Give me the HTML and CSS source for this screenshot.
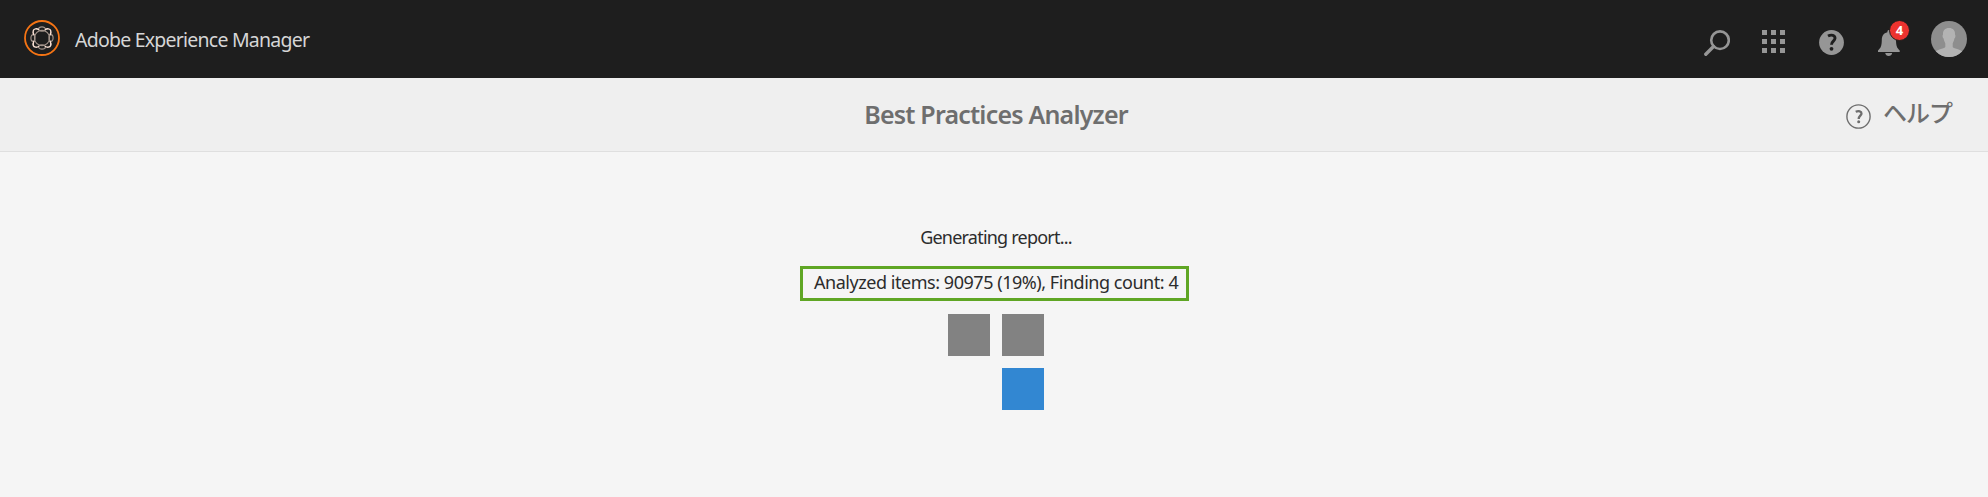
FILE: index.html
```html
<!DOCTYPE html>
<html lang="ja">
<head>
<meta charset="utf-8">
<title>Best Practices Analyzer</title>
<link rel="stylesheet" href="styles.css">
</head>
<body>
<header class="shell">
  <div class="brand">
    <svg class="logo" width="36" height="36" viewBox="-18 -18 36 36" fill="none">
      <circle r="17" stroke="#f57414" stroke-width="1.8"/>
      <g stroke="#a3948b" stroke-width="1.1">
        <ellipse cy="-9" rx="3.4" ry="2.1"/><ellipse cy="9" rx="3.4" ry="2.1"/>
        <ellipse cx="-9" rx="2.1" ry="3.4"/><ellipse cx="9" rx="2.1" ry="3.4"/>
        <circle r="7.6"/>
      </g>
      <path stroke="#ffe5d8" stroke-width="1.4" d="M-3-8.2C-5-9.6-8-9.6-8.7-7.5C-9.3-6-8.8-4.5-8-3M3-8.2C5-9.6 8-9.6 8.7-7.5C9.3-6 8.8-4.5 8-3M-3 8.2C-5 9.6-8 9.6-8.7 7.5C-9.3 6-8.8 4.5-8 3M3 8.2C5 9.6 8 9.6 8.7 7.5C9.3 6 8.8 4.5 8 3"/>
    </svg>
    <span class="product">Adobe Experience Manager</span>
  </div>
  <nav class="actions">
    <svg class="icon" width="26" height="26" viewBox="0 0 26 26" fill="none" stroke="#969696">
      <circle cx="16" cy="10.2" r="8.8" stroke-width="2.6"/>
      <path d="M9.5 16.5L1.8 24.2" stroke-width="3.4" stroke-linecap="round"/>
    </svg>
    <svg class="icon" width="24" height="24" viewBox="0 0 24 24" fill="#969696">
      <path d="M0 0h5v5H0zM9 0h5v5H9zM18 0h5v5h-5zM0 9h5v5H0zM9 9h5v5H9zM18 9h5v5h-5zM0 18h5v5H0zM9 18h5v5H9zM18 18h5v5h-5z"/>
    </svg>
    <svg class="icon" width="25" height="25" viewBox="0 0 25 25">
      <circle cx="12.5" cy="12.5" r="12.4" fill="#969696"/>
      <path d="M9 6.1C12.5 4.2 16.2 5.3 16 8.4C15.8 11 12.4 11.5 12.5 14.7" fill="none" stroke="#1e1e1e" stroke-width="2.9"/>
      <circle cx="12.5" cy="18.8" r="1.9" fill="#1e1e1e"/>
    </svg>
    <div class="alerts">
      <svg class="icon" width="22" height="26" viewBox="0 0 22 26" fill="#969696">
        <path d="M10.9 0C12 0 12.4.8 12.4 2.2C16.5 3 17.9 6 18 10C18.1 16 19 18 21.7 20.4V22H0V20.4C2.8 18 3.7 16 3.8 10C3.9 6 5.4 3 9.4 2.2C9.4.8 9.8 0 10.9 0ZM7.2 23H14.2C13.8 24.8 12.6 26 10.7 26C8.8 26 7.6 24.8 7.2 23Z"/>
      </svg>
      <span class="badge">4</span>
    </div>
    <svg class="avatar" width="36" height="36" viewBox="0 0 36 36">
      <defs><clipPath id="face"><circle cx="18" cy="18" r="18"/></clipPath></defs>
      <g clip-path="url(#face)">
        <path fill="#8e8e8e" d="M0 0h36v36H0z"/>
        <path fill="#b3b3b3" d="M18 7C22 7 24.3 9.4 24 13.5C24.8 14.2 24.5 17 23.4 17.5C23 20 22 21.3 21.7 22.5V26C23 28 31 28.3 32.5 32V36H3.5V32C5 28.3 13 28 14.3 26V22.5C14 21.3 13 20 12.6 17.5C11.5 17 11.2 14.2 12 13.5C11.7 9.4 14 7 18 7Z"/>
      </g>
    </svg>
  </nav>
</header>
<div class="titlebar">
  <h1 class="title">Best Practices Analyzer</h1>
  <a class="help">
    <svg width="25" height="25" viewBox="0 0 25 25" fill="none" stroke="#6e6e6e">
      <circle cx="12.5" cy="12.5" r="11.6" stroke-width="1.4"/>
      <path d="M9.7 7.8C12.7 6.4 15.6 7.2 15.5 9.6C15.4 11.6 12.6 12 12.7 15" stroke-width="2.3"/>
      <circle cx="12.7" cy="17.7" r="1.5" fill="#6e6e6e" stroke="none"/>
    </svg>
    <span class="help-label">ヘルプ</span>
  </a>
</div>
<main class="report">
  <p class="status">Generating report...</p>
  <p class="progress">Analyzed items: 90975 (19%), Finding count: 4</p>
  <div class="spinner">
    <span class="tile"></span>
    <span class="tile"></span>
    <span class="tile tile-active"></span>
  </div>
</main>
</body>
</html>
```
FILE: styles.css
```css
* { box-sizing: border-box; }
body {
  margin: 0;
  height: 497px;
  overflow: hidden;
  background: #f5f5f5;
  font-family: "Noto Sans", "Noto Sans CJK JP", sans-serif;
}
.shell {
  display: flex;
  justify-content: space-between;
  height: 78px;
  padding: 20px 21px 0 24px;
  background: #1e1e1e;
}
.brand, .actions { display: flex; align-items: flex-start; }
.product {
  margin: 6px 0 0 15px;
  color: #d6d6d6;
  font-size: 19.5px;
  line-height: 28px;
  letter-spacing: -0.77px;
  white-space: nowrap;
}
.icon { display: block; margin-top: 10px; }
.actions { gap: 45px; }
.actions > .icon:first-child { margin-right: -13px; }
.actions > .icon:nth-child(2) { margin-right: -12px; }
.alerts { position: relative; margin-left: -11px; margin-right: -14px; }
.badge {
  position: absolute;
  left: 11px;
  top: 0;
  width: 21px;
  height: 21px;
  border: 1px solid #1e1e1e;
  border-radius: 50%;
  background: #ec332f;
  color: #fff;
  font-size: 13px;
  font-weight: 700;
  line-height: 18px;
  text-align: center;
}
.avatar { margin-top: 1px; }
.titlebar {
  display: grid;
  grid-template-columns: 1fr auto 1fr;
  height: 74px;
  padding: 0 36px 0 40px;
  border-bottom: 1px solid #dfdfdf;
  background: #efefef;
  color: #6e6e6e;
}
.title {
  grid-column: 2;
  margin: 19px 0 0;
  font-size: 25px;
  font-weight: 600;
  line-height: 34px;
  letter-spacing: -0.8px;
  white-space: nowrap;
}
.help {
  display: flex;
  justify-self: end;
  gap: 12px;
  padding-top: 26px;
}
.help-label {
  margin-top: -10px;
  font-family: "Noto Sans CJK JP", sans-serif;
  font-size: 24px;
  font-weight: 500;
  line-height: 36px;
  letter-spacing: -1px;
}
.report {
  display: flex;
  flex-direction: column;
  align-items: center;
  padding-top: 73px;
  color: #2c2c2c;
  font-size: 18px;
  white-space: nowrap;
}
.status {
  margin: 0 0 17px 4px;
  line-height: 24px;
  letter-spacing: -0.78px;
}
.progress {
  width: 389px;
  height: 35px;
  margin: 0 0 13px 1px;
  padding-left: 11px;
  border: 3px solid #5fa624;
  line-height: 27px;
  letter-spacing: -0.46px;
}
.spinner {
  display: grid;
  grid-template-columns: 42px 42px;
  gap: 12px;
  margin-left: 4px;
}
.tile { height: 42px; background: #828282; }
.tile-active { grid-column: 2; background: #3287d2; }
```
